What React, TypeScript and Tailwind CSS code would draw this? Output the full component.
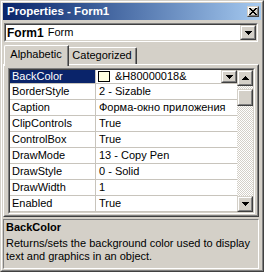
import type { ReactNode } from 'react';

const ROWS: [string, string][] = [
  ['BorderStyle', '2 - Sizable'],
  ['Caption', 'Форма-окно приложения'],
  ['ClipControls', 'True'],
  ['ControlBox', 'True'],
  ['DrawMode', '13 - Copy Pen'],
  ['DrawStyle', '0 - Solid'],
  ['DrawWidth', '1'],
  ['Enabled', 'True'],
];

// classic 3d button bevel
function Raised({ className = '', children }: { className?: string; children?: ReactNode }) {
  return (
    <div
      className={`shrink-0 border border-t-[#d4d0c8] border-l-[#d4d0c8] border-r-[#404040] border-b-[#404040] ${className}`}
    >
      <div className="w-full h-full border border-t-white border-l-white border-r-[#808080] border-b-[#808080] bg-[#d4d0c8] flex items-center justify-center">
        {children}
      </div>
    </div>
  );
}

function DownArrow() {
  return (
    <svg width="7" height="4" shapeRendering="crispEdges">
      <path d="M0 0h7v1H0zM1 1h5v1H1zM2 2h3v1H2zM3 3h1v1H3z" fill="#000" />
    </svg>
  );
}

function UpArrow() {
  return (
    <svg width="7" height="4" shapeRendering="crispEdges">
      <path d="M3 0h1v1H3zM2 1h3v1H2zM1 2h5v1H1zM0 3h7v1H0z" fill="#000" />
    </svg>
  );
}

function CloseGlyph() {
  return (
    <svg width="8" height="7" shapeRendering="crispEdges">
      <path
        d="M0 0h2v1H0zM6 0h2v1H6zM1 1h2v1H1zM5 1h2v1H5zM2 2h4v1H2zM3 3h2v1H3zM2 4h4v1H2zM1 5h2v1H1zM5 5h2v1H5zM0 6h2v1H0zM6 6h2v1H6z"
        fill="#000"
      />
    </svg>
  );
}

export default function App() {
  return (
    <div className="w-[264px] h-[272px] bg-[#d4d0c8] border border-t-[#d4d0c8] border-l-[#d4d0c8] border-r-[#404040] border-b-[#404040] font-['Liberation_Sans',Arial,sans-serif] text-[11px] text-black select-none">
      <div className="h-full border border-t-white border-l-white border-r-[#808080] border-b-[#808080] p-[1px] flex flex-col">
        {/* Title bar */}
        <div className="h-[17px] shrink-0 flex items-center bg-linear-to-r from-[#0a246a] to-[#a6caf0] pl-[4px]">
          <span className="text-white font-bold text-[11.5px] leading-none">Properties - Form1</span>
          <Raised className="ml-auto mr-[2px] w-[12px] h-[11px]">
            <CloseGlyph />
          </Raised>
        </div>

        {/* Object combo */}
        <div className="mt-[3px] ml-[1px] mr-[3px] h-[19px] shrink-0 border border-t-[#808080] border-l-[#808080] border-r-white border-b-white">
          <div className="h-full border border-t-[#404040] border-l-[#404040] border-r-[#d4d0c8] border-b-[#d4d0c8] bg-white flex items-center">
            <span className="ml-[1px] font-bold text-[12px]">Form1</span>
            <span className="ml-[4px]">Form</span>
            <Raised className="ml-auto w-[16px] h-full">
              <DownArrow />
            </Raised>
          </div>
        </div>

        {/* Tabs */}
        <div className="mt-[3px] h-[19px] shrink-0 flex items-end relative z-10">
          <div className="ml-[1px] w-[65px] h-[21px] mb-[-2px] bg-[#d4d0c8] border-l border-t border-r border-l-white border-t-white border-r-[#404040] rounded-tl-[2px]">
            <div className="h-full border-r border-r-[#808080] flex justify-center pt-[2px] leading-[13px]">
              Alphabetic
            </div>
          </div>
          <div className="w-[68px] h-[17px] border-t border-r border-t-white border-r-[#404040] rounded-tr-[2px]">
            <div className="h-full border-r border-r-[#808080] flex justify-center pt-[1px] leading-[13px]">
              Categorized
            </div>
          </div>
        </div>

        {/* Tab panel */}
        <div className="h-[153px] shrink-0 mr-[2px] border border-t-white border-l-white border-r-[#404040] border-b-[#404040]">
          <div className="h-full border border-t-[#d4d0c8] border-l-[#d4d0c8] border-r-[#808080] border-b-[#808080] pt-[2px] pl-[3px] pr-[2px] pb-[1px]">
            {/* Property grid */}
            <div className="h-full border border-t-[#808080] border-l-[#808080] border-r-white border-b-white">
              <div className="h-full border border-t-[#404040] border-l-[#404040] border-r-[#d4d0c8] border-b-[#d4d0c8] bg-white flex">
                <div className="flex-1 flex flex-col overflow-hidden">
                  <div className="h-[14px] shrink-0 flex border-b border-b-[#c8c4bc]">
                    <div className="w-[86px] shrink-0 border-r border-r-[#c8c4bc] pl-[2px] flex items-center bg-[#0a246a] text-white">
                      BackColor
                    </div>
                    <div className="flex-1 flex items-center pl-[2px]">
                      <div className="w-[12px] h-[11px] shrink-0 border border-black bg-[#ffffe1]" />
                      <span className="ml-[5px]">&amp;H80000018&amp;</span>
                      <Raised className="ml-auto w-[16px] h-full">
                        <DownArrow />
                      </Raised>
                    </div>
                  </div>
                  {ROWS.map(([name, value]) => (
                    <div key={name} className="h-[16px] shrink-0 flex border-b border-b-[#c8c4bc]">
                      <div className="w-[86px] shrink-0 border-r border-r-[#c8c4bc] pl-[2px] flex items-center">
                        {name}
                      </div>
                      <div className="flex-1 flex items-center pl-[3px] whitespace-nowrap overflow-hidden">{value}</div>
                    </div>
                  ))}
                </div>

                {/* Scrollbar */}
                <div className="w-[16px] shrink-0 flex flex-col">
                  <Raised className="w-[16px] h-[16px]">
                    <UpArrow />
                  </Raised>
                  <div className="flex-1 pt-[3px] bg-[image:repeating-conic-gradient(#d4d0c8_0_25%,#ffffff_0_50%)] bg-[length:2px_2px]">
                    <Raised className="w-[16px] h-[17px]" />
                  </div>
                  <Raised className="w-[16px] h-[16px]">
                    <DownArrow />
                  </Raised>
                </div>
              </div>
            </div>
          </div>
        </div>

        {/* Description */}
        <div className="mt-[2px] mr-[2px] flex-1 border border-t-[#808080] border-l-[#808080] border-r-white border-b-white pl-[2px] pt-[1px]">
          <div className="font-bold leading-[13px]">BackColor</div>
          <div className="mt-[3px] leading-[13px]">
            Returns/sets the background color used to display text and graphics in an object.
          </div>
        </div>
      </div>
    </div>
  );
}
